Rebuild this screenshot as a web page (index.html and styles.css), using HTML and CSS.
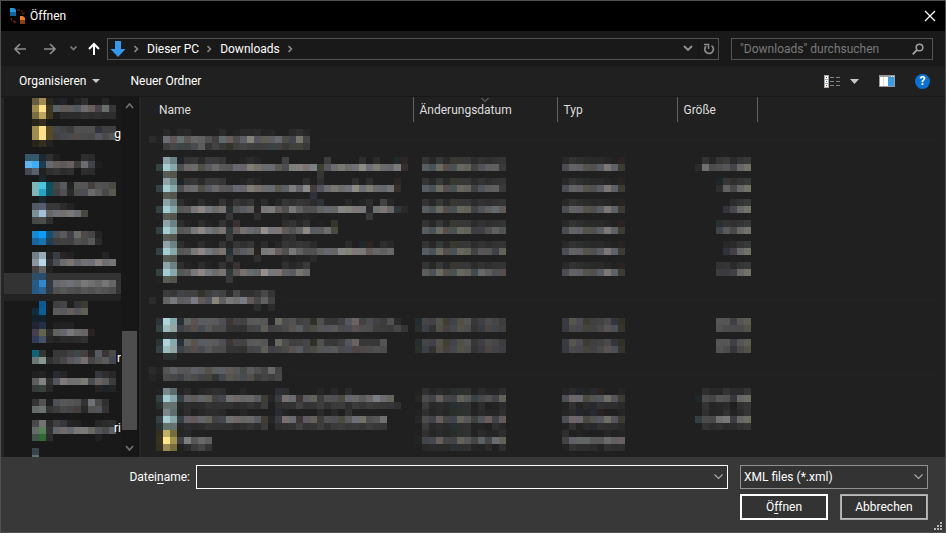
FILE: index.html
```html
<!DOCTYPE html>
<html lang="de">
<head>
<meta charset="utf-8">
<meta name="viewport" content="width=device-width, initial-scale=1">
<title>Öffnen</title>
<link rel="stylesheet" href="styles.css">
</head>
<body>
<main class="dialog">
  <header class="titlebar">
    <svg class="app-icon" width="17" height="17" viewBox="0 0 17 17" aria-hidden="true">
      <path d="M1 0h4l2 2v6H1z" fill="#2497e3"/><path d="M1 4h6v4H1z" fill="#14649c"/>
      <path d="M11 8h3l2 2v6h-5z" fill="#f07a25"/><path d="M11 12h5v4h-5z" fill="#8b3d13"/>
      <path d="M8 2h4l2 3M2 10l1 3 4 1" fill="none" stroke="#7d241d" stroke-dasharray="3 1"/>
      <path d="M12 5h4l-2 2zM5 12l3 2-3 2z" fill="#5b1a16"/>
    </svg>
    <h1>Öffnen</h1>
    <button class="icon-button close" aria-label="Schließen"><svg width="12" height="12" viewBox="0 0 12 12"><path d="M1 1l10 10M11 1L1 11" stroke="#fff" stroke-width="1.3"/></svg></button>
  </header>

  <nav class="navbar">
    <div class="history">
      <button class="icon-button" aria-label="Zurück"><svg width="12" height="12" viewBox="0 0 12 12"><path d="M12 6H1M6 1L1 6l5 5" fill="none" stroke="#8c8c8c" stroke-width="1.7"/></svg></button>
      <button class="icon-button" aria-label="Vorwärts"><svg width="12" height="12" viewBox="0 0 12 12"><path d="M0 6h11M6 1l5 5-5 5" fill="none" stroke="#8c8c8c" stroke-width="1.7"/></svg></button>
      <button class="icon-button recent" aria-label="Zuletzt besucht"><svg width="7" height="5" viewBox="0 0 7 5"><path d="M.5.5l3 3 3-3" fill="none" stroke="#777" stroke-width="1.7"/></svg></button>
      <button class="icon-button" aria-label="Nach oben"><svg width="12" height="13" viewBox="0 0 12 13"><path d="M6 13V2M1 7l5-5 5 5" fill="none" stroke="#fff" stroke-width="2"/></svg></button>
    </div>
    <div class="address">
      <svg class="download-icon" width="16" height="16" viewBox="0 0 16 16" aria-hidden="true"><path d="M5 0h6v8h4.500L8 16 .5 8H5z" fill="#3499ea"/></svg>
      <svg class="crumb-arrow" width="5" height="8" viewBox="0 0 5 8"><path d="M.5 1l3 3-3 3" fill="none" stroke="#888" stroke-width="1.600"/></svg>
      <a href="#pc">Dieser PC</a>
      <svg class="crumb-arrow" width="5" height="8" viewBox="0 0 5 8"><path d="M.5 1l3 3-3 3" fill="none" stroke="#888" stroke-width="1.600"/></svg>
      <a href="#downloads">Downloads</a>
      <svg class="crumb-arrow" width="5" height="8" viewBox="0 0 5 8"><path d="M.5 1l3 3-3 3" fill="none" stroke="#888" stroke-width="1.600"/></svg>
      <button class="icon-button address-drop" aria-label="Vorherige Orte"><svg width="10" height="7" viewBox="0 0 10 7"><path d="M1 1l4 4 4-4" fill="none" stroke="#919191" stroke-width="1.900"/></svg></button>
      <button class="icon-button refresh" aria-label="Aktualisieren"><svg width="12" height="12" viewBox="0 0 12 12"><path d="M8.500 2.600A4.300 4.300 0 1 1 3 3.200" fill="none" stroke="#8c8c8c" stroke-width="1.700"/><path d="M1 1.500h4.500V6" fill="none" stroke="#8c8c8c" stroke-width="1.500"/></svg></button>
    </div>
    <label class="search">
      <input type="search" placeholder="&quot;Downloads&quot; durchsuchen" aria-label="Suchen">
      <svg width="12" height="12" viewBox="0 0 12 12" aria-hidden="true"><circle cx="7.500" cy="4.500" r="3.300" fill="none" stroke="#a0a0a0" stroke-width="1.500"/><path d="M5 7L.7 11.300" stroke="#a0a0a0" stroke-width="1.900"/></svg>
    </label>
  </nav>

  <div class="toolbar">
    <button class="text-button">Organisieren <svg width="8" height="4" viewBox="0 0 8 4"><path d="M0 0h8L4 4z" fill="#c8c8c8"/></svg></button>
    <button class="text-button">Neuer Ordner</button>
    <div class="tools">
      <button class="icon-button view" aria-label="Ansicht">
        <svg width="16" height="13" viewBox="0 0 16 13" shape-rendering="crispEdges"><path d="M0 0h5v13H0z" fill="#aaa"/><path d="M1 1h3v3H1zM1 5h3v3H1zM1 9h3v3H1z" fill="#fff"/><path d="M2 2h1v1H2z" fill="#555"/><path d="M2 6h1v1H2z" fill="#278bd8"/><path d="M2 10h1v1H2z" fill="#c22"/><path d="M6 2.500h10M6 6.500h10M6 10.500h10" stroke="#858585" stroke-dasharray="4 2"/></svg>
        <svg width="9" height="5" viewBox="0 0 9 5"><path d="M0 0h9L4.500 5z" fill="#c8c8c8"/></svg>
      </button>
      <button class="icon-button preview" aria-label="Vorschaufenster"><svg width="16" height="12" viewBox="0 0 16 12" shape-rendering="crispEdges"><path d="M0 0h16v12H0z" fill="#999"/><path d="M1 2h8v9H1z" fill="#fff"/><path d="M4 2h1v9H4z" fill="#ddd"/><path d="M9 2h6v9H9z" fill="#399be4"/><path d="M12 1h1v1h-1zM14 1h1v1h-1z" fill="#eee"/></svg></button>
      <button class="icon-button help" aria-label="Hilfe">?</button>
    </div>
  </div>

  <section class="content">
    <aside class="sidebar">
      <ul class="tree" id="tree"></ul>
      <div class="scrollbar" aria-hidden="true">
        <svg width="9" height="6" viewBox="0 0 9 6"><path d="M1 5l3.500-4L8 5" fill="none" stroke="#707070" stroke-width="1.700"/></svg>
        <div class="track"><div class="thumb"></div></div>
        <svg width="9" height="6" viewBox="0 0 9 6"><path d="M1 1l3.500 4L8 1" fill="none" stroke="#707070" stroke-width="1.700"/></svg>
      </div>
    </aside>
    <div class="files">
      <table>
        <colgroup><col class="c-name"><col class="c-date"><col class="c-type"><col class="c-size"><col></colgroup>
        <thead><tr>
          <th>Name</th>
          <th>Änderungsdatum<svg class="sort" width="8" height="4" viewBox="0 0 8 4"><path d="M.5 0L4 3.500 7.500 0" fill="none" stroke="#858585"/></svg></th>
          <th>Typ</th>
          <th>Größe</th>
          <td></td>
        </tr></thead>
        <tbody id="files"></tbody>
      </table>
    </div>
  </section>

  <form class="footer">
    <label for="filename">Datei<u>n</u>ame:</label>
    <div class="field filename"><input id="filename" type="text"><svg width="9" height="6" viewBox="0 0 9 6"><path d="M.5.5l4 4 4-4" fill="none" stroke="#aaa" stroke-width="1.100"/></svg></div>
    <div class="field filetype"><select aria-label="Dateityp"><option>XML files (*.xml)</option></select><svg width="9" height="6" viewBox="0 0 9 6"><path d="M.5.5l4 4 4-4" fill="none" stroke="#aaa" stroke-width="1.100"/></svg></div>
    <div class="actions">
      <button type="button" class="push primary">Ö<u>f</u>fnen</button>
      <button type="button" class="push">Abbrechen</button>
    </div>
    <svg class="grip" width="8" height="8" viewBox="0 0 8 8" shape-rendering="crispEdges" aria-hidden="true"><path d="M6 0h2v2H6zM3 3h2v2H3zM6 3h2v2H6zM0 6h2v2H0zM3 6h2v2H3zM6 6h2v2H6z" fill="#b5b5b5"/></svg>
  </form>
</main>
<script src="mosaic.js"></script>
</body>
</html>
```

FILE: styles.css
```css
* { box-sizing: border-box; }
body { margin: 0; background: #383838; color: #fff; font: 12px/16px Roboto, "Noto Sans", sans-serif; }
button, input, select { font: inherit; color: inherit; }
svg { display: block; flex: none; }
a { color: inherit; text-decoration: none; }
.dialog { height: 100vh; display: flex; flex-direction: column; border: 1px solid #505050; overflow: hidden; }
.icon-button { display: flex; align-items: center; justify-content: center; padding: 0; border: 0; background: none; }

.titlebar { flex: none; height: 30px; display: flex; align-items: center; gap: 4px; padding: 0 9px 0 8px; background: #000; }
.titlebar h1 { margin: 0; font-size: 12px; font-weight: 400; }
.close { margin-left: auto; }

.navbar { flex: none; height: 35px; display: flex; align-items: center; padding: 0 12px; background: #191919; }
.history { display: flex; align-items: center; gap: 18px; width: 94px; padding-left: 1px; }
.recent { margin: 0 -7px 0 -4px; }
.address { flex: 1; height: 22px; display: flex; align-items: center; border: 1px solid #535353; padding-left: 2px; }
.crumb-arrow { margin: 0 8px; }
.address-drop { margin-left: auto; padding-right: 5px; }
.refresh { width: 20px; height: 20px; border-left: 1px solid #141414; }
.search { width: 202px; height: 22px; display: flex; align-items: center; margin-left: 12px; padding: 0 8px; border: 1px solid #535353; }
.search input { flex: 1; min-width: 0; padding: 0; border: 0; outline: 0; background: none; }
.search input::placeholder { color: #7a7a7a; opacity: 1; }

.toolbar { flex: none; height: 31px; display: flex; align-items: center; gap: 30px; padding: 0 15px 0 18px; background: #202020; border-bottom: 1px solid #171717; }
.text-button { display: flex; align-items: center; gap: 6px; padding: 0; border: 0; background: none; }
.tools { margin-left: auto; display: flex; align-items: center; gap: 20px; }
.view { gap: 10px; }
.help { width: 15px; height: 15px; border-radius: 50%; background: #0b72d3; font-weight: 700; }

.content { flex: 1; min-height: 0; display: flex; background: #202020; }
.sidebar { width: 140px; display: flex; background: #191919; border-left: 3px solid #262626; border-right: 2px solid #262626; }
.tree { flex: 1; min-width: 0; margin: 0; padding: 1px 0 0; list-style: none; overflow: hidden; }
.tree li { position: relative; padding-left: 21px; }
.tree .selected { background: linear-gradient(#333 21px, #222 21px); }
.tail { position: absolute; right: 0; top: 0; }
.scrollbar { width: 18px; display: flex; flex-direction: column; align-items: center; padding: 6px 0; background: #171717; border-right: 1px solid #121212; }
.track { flex: 1; width: 15px; display: flex; flex-direction: column; justify-content: flex-end; padding-bottom: 15px; }
.thumb { height: 31%; background: #4d4d4d; }

.files { flex: 1; min-width: 0; overflow: hidden; }
table { width: 100%; table-layout: fixed; border-collapse: collapse; }
.c-name { width: 272px; }
.c-date { width: 144px; }
.c-type { width: 120px; }
.c-size { width: 80px; }
th { position: relative; height: 25px; padding: 0 6px; border-right: 1px solid #636363; text-align: left; font-weight: 400; color: #dedede; }
th:first-child { padding-left: 18px; }
.sort { position: absolute; top: 1px; left: calc(50% - 4px); }
td { padding: 0; vertical-align: top; }
.file td:nth-child(1) { padding-left: 15px; }
.file td:nth-child(2) { padding-left: 2px; }
.file td:nth-child(3) { padding-left: 5px; }
.file td:nth-child(4) { padding-right: 6px; }
.file td:nth-child(4) svg { margin-left: auto; }
.group td { padding: 7px 0 7px 8px; }
.group div { display: flex; align-items: center; }
.group div::after { content: ""; flex: 1; height: 1px; margin: 0 8px; background: #232323; }

.footer { flex: none; position: relative; display: grid; grid-template-columns: 189px 1fr 188px; column-gap: 6px; row-gap: 5px; padding: 8px 17px 12px 0; background: #383838; align-items: center; }
.footer > label { text-align: right; }
.field { height: 24px; display: flex; align-items: center; position: relative; background: #333; border: 1px solid #fff; }
.filename { margin-right: 6px; }
.filetype { border-color: #919191; }
.field input, .field select { width: 100%; height: 22px; padding: 0 24px 0 3px; border: 0; outline: 0; background: none; appearance: none; }
.field svg { position: absolute; right: 4px; pointer-events: none; }
.actions { grid-column: 3; display: flex; gap: 12px; }
.push { flex: 1; height: 26px; padding: 0; background: #333; border: 1px solid #aaa; outline: 1px solid #bbb; outline-offset: -2px; }
.primary { border-color: #fff; outline-color: #fff; }
.grip { position: absolute; right: 3px; bottom: 2px; }
u { text-underline-offset: 2px; }
```

FILE: mosaic.js
```js
// Obscured entries are drawn as blocks. A token is a two-digit grey level with
// an optional tint letter, a six-digit colour, or "." for an empty block.
const SIZE = 7;
const TINT = { b: [-4, 0, 6], r: [5, -2, -3], y: [2, 2, -7], g: [-2, 3, -1], c: [-7, 2, 4], v: [1, -2, 5] };

function colour(token) {
  if (token.length === 6) return "#" + token;
  const level = parseInt(token.slice(0, 2), 16);
  const tint = TINT[token[2]] || [0, 0, 0];
  return "rgb(" + tint.map(t => level + t).join(",") + ")";
}

function mosaic(lines) {
  const rows = lines.map(l => l.trim() ? l.trim().split(/\s+/) : []);
  const w = Math.max(...rows.map(r => r.length)) * SIZE;
  const h = rows.length * SIZE;
  let rects = "";
  rows.forEach((r, y) => r.forEach((t, x) => {
    if (t !== ".") rects += `<rect x="${x * SIZE}" y="${y * SIZE}" width="7" height="7" fill="${colour(t)}"/>`;
  }));
  return `<svg width="${w}" height="${h}" viewBox="0 0 ${w} ${h}" shape-rendering="crispEdges" aria-hidden="true">${rects}</svg>`;
}

const ICON = {
  file: [". 8da3a7 6b8285", "344142 a4cdd4 87a9ac", "22 575c54 53554d"],
  flat: ["2b3335 b0d3da 86a9ae", "344142 9dbcc0 94a5a0", ". 2b3131 2b3131"],
  low: ["22 7a878d 5a6c6e", "344142 a4cdd4 87a9ac", "283030 65716d 65716d"],
  folder: ["352f22 bfae66 776c3c", "3a341f ffe68c a39450", "352f22 998b52 776c3c"]
};

const DT = ". 34 28 37g 2a 37y 37 37 2c 33 2e 32 34";
const TT = "29 33 2e 2ag 29 2a 26 22 25r";
const TM = "4eb 63 60v 52y 50 5db 78r 62b 3ay";
const DF = ["2bc 45 42v 50y 3dy 44b 4dy 54 37 40v 4b 46 3c", "2cg 40b 33 4dy 42r 49b 50y 4d 34 3cb 46r 44b 3f"];
const TF = ["3cb 54y 4dv 3ay 3f 42 4a 37b 2ey", "3bb 4a 48v 42y 42 49 54r 50b 33y"];
const DL = "22 30 26 2b 27 2bg 2eg 30g 23 2b 26 25 2e";
const TL = "25 2b 27b 24 2ab 25r . . 25";
const TLM = "50b 69r 68v 48y 52g 58b 6cy 55v 3ay";

const groups = [
  {
    head: [". . 29 21 27 2a . . . . 2a . 23 2a 2a 2c 24 26 . . 2a 30 27",
           "2b 23 6db 58r 6bc 57r 65 60 50 40 67c 5fr 4c 60b 80y 56v 5ay 5c 68b 4ay 46b 73y 45",
           ". . 3e 47 44c 42 4cb 5c 35 42 38 31y 3e 44 3e 3c 3e 40c 40 38 40 40y 39"],
    files: [
      { icon: "file", name: [
        "24b 33 36 2a 3a 3a 35 . . 25 2c 25 . . . 42 . . . . . 3c . . . . 2e . 2b . . 26c 28r",
        "4d 68 6b 4dy 5bb 68 58 55 69b 66v 7cy 72r 6c 6cb 57y 4cv 7cg 80r 76r 80b 3cy 57b 6c 76y 6c 72b 8ay 70b 7ay 6a 68b 7a 30r",
        ". . . . . . . . . . . . . . . . . . . . 36"],
        date: [DT, ". 5cb 50c 68y 50r 4fc 65y 60y 42 54b 5d 5f 3a"], type: [TT, TM], size: [". 33 25 35 3a 2a 34 38g", "2b 70 4c 50 56 45v 66 70y"] },
      { icon: "file", name: [
        "24b 33 36 2a 3a 3a 35 . . 25 2c 25 . . . . . . 2e . 30 . . . . 2e . 2e . . . 28r",
        "4d 68 6b 4dy 5bb 68 58 55 69b 66v 7cy 72r 6c 6cb 57y 60b 7c 65v 88g 40r 57b 6c 76y 6c 72b 8ay 70b 7ay 6a 68b 72 30r",
        ". . . . . . . . . . . . . . . . . . . 33b"],
        date: [DT, ". 5cb 50c 68y 50r 4fc 65y 60y 42 54b 5d 5f 3a"], type: [TT, TM], size: ["23c 35 30 34 38g", "2c 60 48 66 70y"] },
      { icon: "file", name: [
        "2e 23 . 2d 23 . 33 24 36 2f 35 22 2c . 27 36 31 37 33 2b 33b . . . 28 . 25 2e . 42 28",
        "56 5a 78 88r 78b 6c 75r 2ec 52 5cb 62 24r 78 7c 60r 50 78 60 50 50 60g 68b 66 86 80y 7ar 78 2bv 6fg 78r 68 35b 2a",
        ". . . . . . . 37 . . . 2f . . . 25 . 23 25 22 . . . . . . . 39"],
        date: [DT, ". 5cb 50c 68y 50r 4fc 65y 60y 42 54b 60 68c 5cr"], type: [TT, TM], size: [". 2d 34 38g", "36b 48v 66 70y"] },
      { icon: "file", name: [
        "2e 23 . 2d 23 . 33 24 33r . . . . . . 2e 33 28 31 . 22 . 33y",
        "56 5a 78 88r 78b 6c 75r 37c 58r 72r 6bb 64 90r 78b 78r 5cr 52 64 88r 5cb 5b 6c 48y",
        ". . . . . . . 38 . . . . . . . 2c 2e"],
        date: [DT, ". 5cb 50c 68y 50r 4fc 65y 60y 3e 40v 50 60 52g"], type: [TT, TM], size: ["2dc 33 30 34 38g", "44b 58 48 66 70y"] },
      { icon: "file", name: [
        "2e 23 . 2d 23 . 33 24 36 2f 35 22 2c . 27 36 31 37 33 2b . . . . 2b . 26c 26r . 2e 28",
        "56 5a 78 88r 78b 6c 75r 2ec 52 5cb 62 24r 78 7c 60r 50 78 60 50 50 60g 68b 66 86 80y 7ar 78 5cr 65 60 68",
        ". . . . . . . 37 . . . 2f . . . 25 . 23 25 2a"],
        date: [DT, ". 5cb 50c 68y 50r 4fc 65y 60y 42 56 55 42b 60y"], type: [TT, TM], size: ["28 2a 34 38g", "33b 42v 66 70y"] },
      { icon: "file", name: [
        "2e 23 . 2d 23 . 33 24 33r . . . . . . 30 26 2c 3a",
        "56 5a 78 88r 78b 6c 75r 37c 58r 72r 6bb 64 90r 78b 78r 60 5cb 74y 68",
        ". . . . . . . 38"],
        date: [DT, ". 5c 50c 68y 50r 4fc 65y 60y 48c 68 5c 50b 50r"], type: [TT, TM], size: ["33 35 2a 34 38g", "3cv 3b 40v 66 70y"] }
    ]
  },
  {
    head: [". . 3c 37 44b 40 40 30y 3d 48b 42 2b 48 30 30 36 48 35",
           "2b . 64 7ab 5c 60 7cb 5cr 54b 84y 60 78 70 7cb 5cr 48 60 40",
           ". . . . . . . . . . . . . . . 2cg . 2b"],
    files: [
      { icon: "flat", name: [
        "30b 60g 54r 5cb 5c 5a 50b 38r 44 42 58 5a 56 25v 66y 4d 52 3f 45 2ey 50 38 37 40 57b 65r 42 4db 41 3c 50 2b",
        "42b 4b 50r 4bb 56 4b 4b 34 33 32 44 47b 5by 41v 44 4a 54r 5bb 46 4ay 54 56b 58 4b 4db 54r 4f 4d 3e 3d 3b 46 35"],
        date: DF, type: TF, size: ["56 55 40v 55 5ay", "52 4b 4b 49 50y"] },
      { icon: "flat", name: [
        "30b 60g 54r 5cb 5c 5a 50b 38r 44 42 58 5a 56 25v 66y 4d 3f 40 45 2ey 50 38 37 40 57b 65r 38 38 37 54",
        "42b 4b 50r 4bb 56 4b 4b 34 33 32 44 47b 5by 41v 44 4a 54r 5bb 46 4ay 54 56b 58 4b 4db 48r 4ar 4c 50 4c"],
        date: DF, type: TF, size: ["56 55 40v 55 5ay", "52 4b 36v 49 50y"] }
    ]
  },
  {
    head: ["2b 24 54 63b 57 56 62b 5b 50y 5cg 60b 5cr 57 48g 5c 50 46 68 44",
           "25 . 4b 47 42b 50 4b 45b 42y 34g 48b 54y 50 4cb 50r 3cg 43 3e 48"],
    files: [
      { icon: "low", name: [
        "24 2c . 27 2b 30 2d . . 26 . . . . 30b 2d . . . . 26 . 28 . 2c",
        "3dc 60v 5cr 66b 5fy 42 48b 70 6ar 66 68 5cb 3cy 26 3cb 72r 6cb 38r 5cv 60y 3c 52 50v 48y 66b 68 5c 68r 7eb 6cv 64y",
        "27 2d 2a 2c 33 31 32 31 2b 2e 34 2e 3b . 2e 31 32 40 33 35 3d 32 3a 3c 2e 3a 36 3c 38 36 35 30"],
        date: [DL, "27 4b 44b 60r 45 44b 60y 57 40c 48 50 45b 60y", ". 3a 29 2c 2a 2dc 2f 31 22 2c . 23 2b"], type: [TL, TLM, "22 31 24 2b 2ab 31 2e 2e 2a"], size: [". 2f 28 27 34 2c 2b 35", "25c 4b 46 56 52 38v 66 6ay", ". 33 25 28 2b . 31 35"] },
      { icon: "low", name: [
        "24 2c . 27 2b 2d 29 . . 26 . . . . 2cb 25 . . . . 2a . 29 . 30",
        "3dc 60v 5cr 66b 5fy 42 48b 70 6ar 66 68 5cb 3cy 26 3cb 72r 6cb 38r 5cv 60y 3c 52 50v 48y 5a 70b 70y 50 56 70",
        "27 2d 2a 2c 33 31 32 31 2b 2e 34 2e 3b . 2e 31 32 40 33 35 3d 32 3a 3c 38 3a 36 3c 38 36"],
        date: [DL, "27 4b 44b 60r 45 44b 60y 57 40g 55b 60r 44b 5cr", ". 3a 29 2c 2a 2dc 2f 31 22 24 . 2f 29"], type: [TL, TLM, "22 31 24 2b 2ab 31 2e 2e 2a"], size: [". 2f 25 26 30 23 2b 35", "3cc 4b 48 70 77 3ev 66 6ay", ". 33 2d 30 2b 2b 31 35"] },
      { icon: "folder", name: ["26 28", "42b 7d 57 68 5e", "22 2a 3a 45 34"],
        date: [DL, "24 45b 48b 60r 45 44b 60y 57 45 60c 45 6cb 60y", ". 28 2a 2b 2a 2fc 2f 31 25 23 2b . 2e"], type: ["2e . 24 . . . 27 22 25", "42 62b 64g 64g 58 58 6a 60 62r", "23 33 2e 2e 2b 24 31 2d 2e"], size: [] }
    ]
  }
];

const tree = [
  { rows: [". 655d3d a08c50 2c281f 20 24b . 22 2e . . 25", ". a08c50 ffe08c 403820 60c 5cr 5b 58b 6d 60r 45v 6cg 38", ". 7b6c42 bca75d 403820 20 2b 2c 2c 31 2d 30 2c 2e", ". 28241c 352e20"] },
  { tail: "g", rows: [". a08c50 ffe08c 574a26 48b 42 3c 50 4f 50 34b 40 40", ". a08c50 ffe08c 574a26 42 48b 4a 4cr 4a 48 56b 4a 55", ". 28241c 352e20 22", "."] },
  { rows: ["35576c 35576c 1d2a32 30 20 . . . 2e 2b", "60b4ef 40adf7 213c4e 6ab 60r 5b 62r 3d 6c 44b 1e", "474a53 57606b 20 2f 34 2b 30 . 2d 2b", ". . 1b282b"] },
  { rows: [". 80b5b5 48c7e1 0e505d 46 5bb 22 55g 55 40r 52 50 48y", ". 80b5b5 22a6c4 0e505d 40 50 2a 4c 50b 6a 5c 48 57y", ". . 1b282b"] },
  { rows: [". 515966 565b70 38 38 2c 22", ". 7c9096 a0c1db 66 72b 70r 78 6db 47y", ". 48 4c 30", "."] },
  { rows: [". 1689d5 0a9eff 155075 4fb 5a 40v 68g 4cr 45 24", ". 1764a0 1976af 203f54 3f 41 3f 50 4a 58 2b", "."] },
  { rows: [". 747e87 95aab5 24 3eb 26r 22 . . . . 24", ". 8c959e b8d6e9 30 4fb 6c 76r 67b 70 70b 82r 6e 75", ". 43 60 22"] },
  { selected: true, rows: [". 304d68 294c71", ". 275985 3487c9 313a44 68b 6c 72b 6a 78 70 67 76 66", ". 275985 2d6392 303942 50 57 50 4c 56 50 57 52 4d", "."] },
  { rows: [". . 0a5b91 . 40 45 20 34v 3ay", ". 102b3a 0a6095 . 5c 5ab 60r 56v 5cy", ". 12222a 12222a"] },
  { rows: [". 222433 252e48 . 20 22 22", ". 46404e 62644e 2e 60g 68b 78 6a 65 24r", ". 303b57 445066 28 23 29 28 2b 30", "."] },
  { tail: "r", rows: [". 106276 34 . 38 38 40 45c 40r 28 5bb 36r 4a", ". 6d7775 869790 30 3c 46 57v 60b 70r 45 52 5b 48b", "."] },
  { rows: [". 20 23 . 2bb 25 . . . . 38b 2e 28", ". 5d 82 30 56b 7ar 70 70 7ay 4cc 65r 5a 3c", ". 373c3a 394239 28 . . . . . . 24 22b 24", "."] },
  { rows: [". 34 52 1f 50b 57 55 50 33 72b 48 2f", ". 666b6a 68746d 35 3c 47 44 40r 2a 52 55b 34", "."] },
  { tail: "ri", rows: [". 49 72 2c 40 38b 24 22 . . 28 2c 2e", ". 656b68 558157 33 65b 6cr 68b 78 7a 68y 55b 4a 60b", ". 40544a 30692f 2c . . . . . . 21", "."] },
  { rows: [". 394549", ". 5c7075"] }
];

document.getElementById("files").innerHTML = groups.map(g =>
  `<tr class="group"><td colspan="5"><div>${mosaic(g.head)}</div></td></tr>` +
  g.files.map(f => {
    const name = ICON[f.icon].map((icon, i) => icon + " " + (f.name[i] || ""));
    const cell = lines => `<td>${lines.length ? mosaic(lines) : ""}</td>`;
    return `<tr class="file">${cell(name)}${cell(f.date)}${cell(f.type)}${cell(f.size)}<td></td></tr>`;
  }).join("")
).join("");

document.getElementById("tree").innerHTML = tree.map(t =>
  `<li${t.selected ? ' class="selected"' : ""}>${mosaic(t.rows)}${t.tail ? `<span class="tail">${t.tail}</span>` : ""}</li>`
).join("");
```
